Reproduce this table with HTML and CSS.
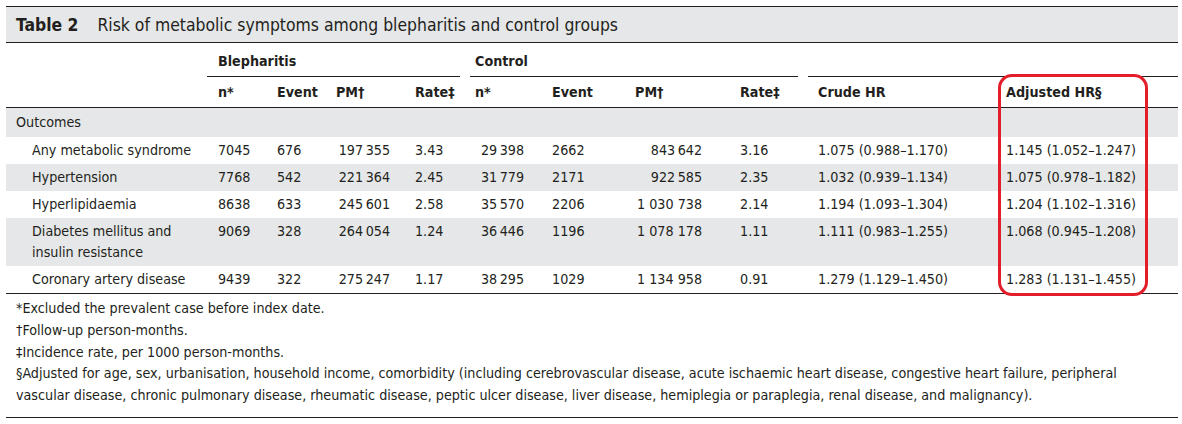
FILE: index.html
```html
<!DOCTYPE html>
<html lang="en">
<head>
    <meta charset="UTF-8">
    <title>Table 2</title>
    <link rel="stylesheet" href="styles.css">
</head>
<body>
    <div class="table-box">
        <div class="table-title">
            <b>Table 2</b>
            <span>Risk of metabolic symptoms among blepharitis and control groups</span>
        </div>

        <table class="data-table">
            <colgroup>
                <col style="width:201px"><col style="width:59px"><col style="width:59px"><col style="width:79px">
                <col style="width:60px"><col style="width:77px"><col style="width:83px"><col style="width:105px">
                <col style="width:78px"><col style="width:188px"><col style="width:183px">
            </colgroup>
            <thead>
                <tr class="group-row">
                    <th></th>
                    <th colspan="4"><div class="group-rule rule-bleph">Blepharitis</div></th>
                    <th colspan="4"><div class="group-rule rule-control">Control</div></th>
                    <th colspan="2"><div class="group-rule rule-hr">&nbsp;</div></th>
                </tr>
                <tr class="head-row">
                    <th></th>
                    <th>n*</th>
                    <th>Event</th>
                    <th>PM†</th>
                    <th>Rate‡</th>
                    <th>n*</th>
                    <th>Event</th>
                    <th>PM†</th>
                    <th>Rate‡</th>
                    <th>Crude HR</th>
                    <th>Adjusted HR§</th>
                </tr>
            </thead>
            <tbody>
                <tr class="shade section">
                    <td colspan="11">Outcomes</td>
                </tr>
                <tr>
                    <td class="label">Any metabolic syndrome</td>
                    <td>7045</td><td>676</td><td class="pm">197&thinsp;355</td><td>3.43</td>
                    <td class="cn">29&thinsp;398</td><td>2662</td><td class="pm2">843&thinsp;642</td><td>3.16</td>
                    <td>1.075 (0.988–1.170)</td><td>1.145 (1.052–1.247)</td>
                </tr>
                <tr class="shade">
                    <td class="label">Hypertension</td>
                    <td>7768</td><td>542</td><td class="pm">221&thinsp;364</td><td>2.45</td>
                    <td class="cn">31&thinsp;779</td><td>2171</td><td class="pm2">922&thinsp;585</td><td>2.35</td>
                    <td>1.032 (0.939–1.134)</td><td>1.075 (0.978–1.182)</td>
                </tr>
                <tr>
                    <td class="label">Hyperlipidaemia</td>
                    <td>8638</td><td>633</td><td class="pm">245&thinsp;601</td><td>2.58</td>
                    <td class="cn">35&thinsp;570</td><td>2206</td><td class="pm2">1 030 738</td><td>2.14</td>
                    <td>1.194 (1.093–1.304)</td><td>1.204 (1.102–1.316)</td>
                </tr>
                <tr class="shade">
                    <td class="label">Diabetes mellitus and<br>insulin resistance</td>
                    <td>9069</td><td>328</td><td class="pm">264&thinsp;054</td><td>1.24</td>
                    <td class="cn">36&thinsp;446</td><td>1196</td><td class="pm2">1 078 178</td><td>1.11</td>
                    <td>1.111 (0.983–1.255)</td><td>1.068 (0.945–1.208)</td>
                </tr>
                <tr>
                    <td class="label">Coronary artery disease</td>
                    <td>9439</td><td>322</td><td class="pm">275&thinsp;247</td><td>1.17</td>
                    <td class="cn">38&thinsp;295</td><td>1029</td><td class="pm2">1 134 958</td><td>0.91</td>
                    <td>1.279 (1.129–1.450)</td><td>1.283 (1.131–1.455)</td>
                </tr>
            </tbody>
        </table>

        <div class="notes">
            <p>*Excluded the prevalent case before index date.</p>
            <p>†Follow-up person-months.</p>
            <p>‡Incidence rate, per 1000 person-months.</p>
            <p>§Adjusted for age, sex, urbanisation, household income, comorbidity (including cerebrovascular disease, acute ischaemic heart disease, congestive heart failure, peripheral vascular disease, chronic pulmonary disease, rheumatic disease, peptic ulcer disease, liver disease, hemiplegia or paraplegia, renal disease, and malignancy).</p>
        </div>

        <!-- red highlight drawn over the adjusted HR column -->
        <div class="highlight"></div>
    </div>
</body>
</html>
```

FILE: styles.css
```css
body {
  margin: 0;
  padding-top: 6px;
  background-color: white;
  color: #231f20;
  font-family: "Liberation Sans Narrow", "DejaVu Sans Condensed", "Open Sans", sans-serif;
  font-stretch: condensed;
  font-size: 14.2px;
}

.table-box {
  position: relative;
  width: 1172px;
  margin-left: 6px;
  border-top: 1px solid #231f20;
  border-bottom: 1px solid #231f20;
}

.table-title {
  background-color: #e6e7e8;
  height: 35px;
  line-height: 36px;
  padding-left: 10px;
  font-size: 17.4px;
  border-bottom: 1px solid #231f20;
}

.table-title b {
  margin-right: 14px;
}

.data-table {
  width: 1172px;
  table-layout: fixed;
  border-collapse: collapse;
}

th, td {
  padding: 0 0 0 11px;
  text-align: left;
  white-space: nowrap;
}

th {
  font-weight: bold;
}

.group-row th {
  height: 34px;
  padding: 0;
  vertical-align: bottom;
}

.group-rule {
  border-bottom: 1px solid #231f20;
  padding: 0 0 7px 11px;
}

.rule-bleph {
  margin-right: 4px;
}

.rule-control {
  margin-left: 6px;
  margin-right: 9px;
  padding-left: 5px;
}

.rule-hr {
  margin-left: 1px;
}

.head-row th {
  height: 30px;
  border-bottom: 1px solid #231f20;
}

tbody td {
  line-height: 21px;
  padding-top: 3px;
  padding-bottom: 3px;
  vertical-align: top;
}

.section td {
  padding-left: 10px;
  height: 23px;
  vertical-align: middle;
}

.shade {
  background-color: #e6e7e8;
}

td.label {
  padding-left: 26px;
  white-space: normal;
}

td.pm {
  text-align: right;
  padding-right: 14px;
}

td.cn {
  text-align: right;
  padding-right: 17px;
}

td.pm2 {
  text-align: right;
  padding-right: 27px;
}

tbody tr:last-child td {
  border-bottom: 1px solid #231f20;
}

.notes {
  padding: 4px 10px 10px;
}

.notes p {
  margin: 0;
  line-height: 21.8px;
}

.highlight {
  position: absolute;
  left: 992px;
  top: 67px;
  width: 144px;
  height: 216px;
  border: 3px solid #e31e2a;
  border-radius: 14px;
}
```
